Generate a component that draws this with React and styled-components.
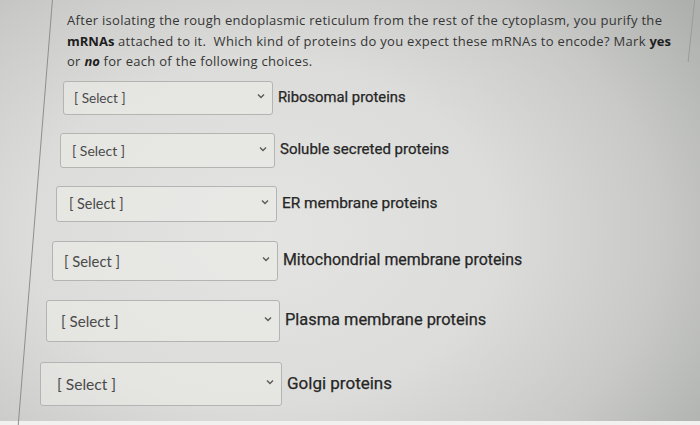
import React from 'react';
import styled, { createGlobalStyle } from 'styled-components';

const GlobalStyle = createGlobalStyle`
  html, body {
    margin: 0;
    padding: 0;
  }
  body {
    font-family: Lato, "Noto Sans", sans-serif;
  }
`;

const Screen = styled.div`
  position: relative;
  width: 700px;
  height: 425px;
  overflow: hidden;
  background:
    radial-gradient(ellipse 75% 90% at 38% 55%, #e4e4e2 0%, #dcdcda 45%, #c9cac8 75%, #aeb0ae 100%);
  display: flex;
  flex-direction: column;
`;

const Card = styled.div`
  position: relative;
  flex: 1;
  padding: 10px 0 0 67px;

  &::before {
    content: '';
    position: absolute;
    left: 35px;
    top: -10px;
    bottom: -10px;
    border-left: 1px solid #8e8f8d;
    transform: skewX(-4.6deg);
  }

  &::after {
    content: '';
    position: absolute;
    right: 8px;
    top: -2px;
    height: 64px;
    border-left: 1px solid #9a9b99;
    transform: skewX(-6deg);
  }
`;

const Prompt = styled.p`
  margin: 0;
  width: 625px;
  white-space: nowrap;
  font-family: "Open Sans", "Liberation Sans", sans-serif;
  font-size: 13px;
  line-height: 20.5px;
  color: #353535;
  letter-spacing: 0.3px;
`;

const Strong = styled.span`
  font-weight: 700;
  color: #1e1e1e;
  letter-spacing: 0;
  font-style: ${p => (p.$italic ? 'italic' : 'normal')};
`;

const List = styled.div`
  display: flex;
  flex-direction: column;
  margin-top: 9px;
`;

const Row = styled.div`
  display: flex;
  align-items: center;
  margin-top: ${p => p.$gap}px;
  margin-left: ${p => p.$indent}px;
`;

const SelectBox = styled.div`
  box-sizing: border-box;
  display: flex;
  align-items: center;
  justify-content: space-between;
  width: ${p => p.$w}px;
  height: ${p => p.$h}px;
  padding: 0 7px 0 ${p => p.$pad}px;
  border: 1px solid #b4b5b3;
  border-radius: 3px;
  background: rgba(236, 236, 234, 0.55);
  color: #4a4a4a;
  font-size: ${p => p.$fs}px;
`;

const Chevron = styled.svg`
  width: 8px;
  height: 6px;
  margin-top: -3px;
  flex-shrink: 0;
`;

const Label = styled.span`
  margin-left: 5px;
  font-family: Roboto, "Liberation Sans", sans-serif;
  font-weight: 400;
  -webkit-text-stroke: 0.25px #262626;
  color: #262626;
  font-size: ${p => p.$fs}px;
  margin-top: -2px;
`;

const BottomEdge = styled.div`
  height: 4px;
  background: #f1f1ef;
`;

const rows = [
  { label: 'Ribosomal proteins', indent: -4, gap: 0, w: 210, h: 34, pad: 10, sel: 13.6, fs: 14.8 },
  { label: 'Soluble secreted proteins', indent: -7, gap: 18, w: 215, h: 35, pad: 11, sel: 14, fs: 15 },
  { label: 'ER membrane proteins', indent: -11, gap: 18, w: 221, h: 36, pad: 12, sel: 14.4, fs: 15.4 },
  { label: 'Mitochondrial membrane proteins', indent: -15, gap: 19, w: 226, h: 40, pad: 11, sel: 14.8, fs: 15.9 },
  { label: 'Plasma membrane proteins', indent: -21, gap: 19, w: 234, h: 42, pad: 14, sel: 15.2, fs: 16.4 },
  { label: 'Golgi proteins', indent: -27, gap: 20, w: 242, h: 44, pad: 16, sel: 15.6, fs: 17 },
];

function App() {
  return (
    <>
      <GlobalStyle />
      <Screen>
        <Card>
          <Prompt>
            After isolating the rough endoplasmic reticulum from the rest of the cytoplasm, you purify the
            <br />
            <Strong>mRNAs</Strong> attached to it.&nbsp; Which kind of proteins do you expect these mRNAs to encode? Mark <Strong>yes</Strong>
            <br />
            or <Strong $italic>no</Strong> for each of the following choices.
          </Prompt>
          <List>
            {rows.map(r => (
              <Row key={r.label} $gap={r.gap} $indent={r.indent}>
                <SelectBox $w={r.w} $h={r.h} $pad={r.pad} $fs={r.sel}>
                  <span>[ Select ]</span>
                  <Chevron viewBox="0 0 8 6">
                    <polyline points="1,1.5 4,4.5 7,1.5" fill="none" stroke="#5a5a5a" strokeWidth="1.4" />
                  </Chevron>
                </SelectBox>
                <Label $fs={r.fs}>{r.label}</Label>
              </Row>
            ))}
          </List>
        </Card>
        <BottomEdge />
      </Screen>
    </>
  );
}

export default App;
